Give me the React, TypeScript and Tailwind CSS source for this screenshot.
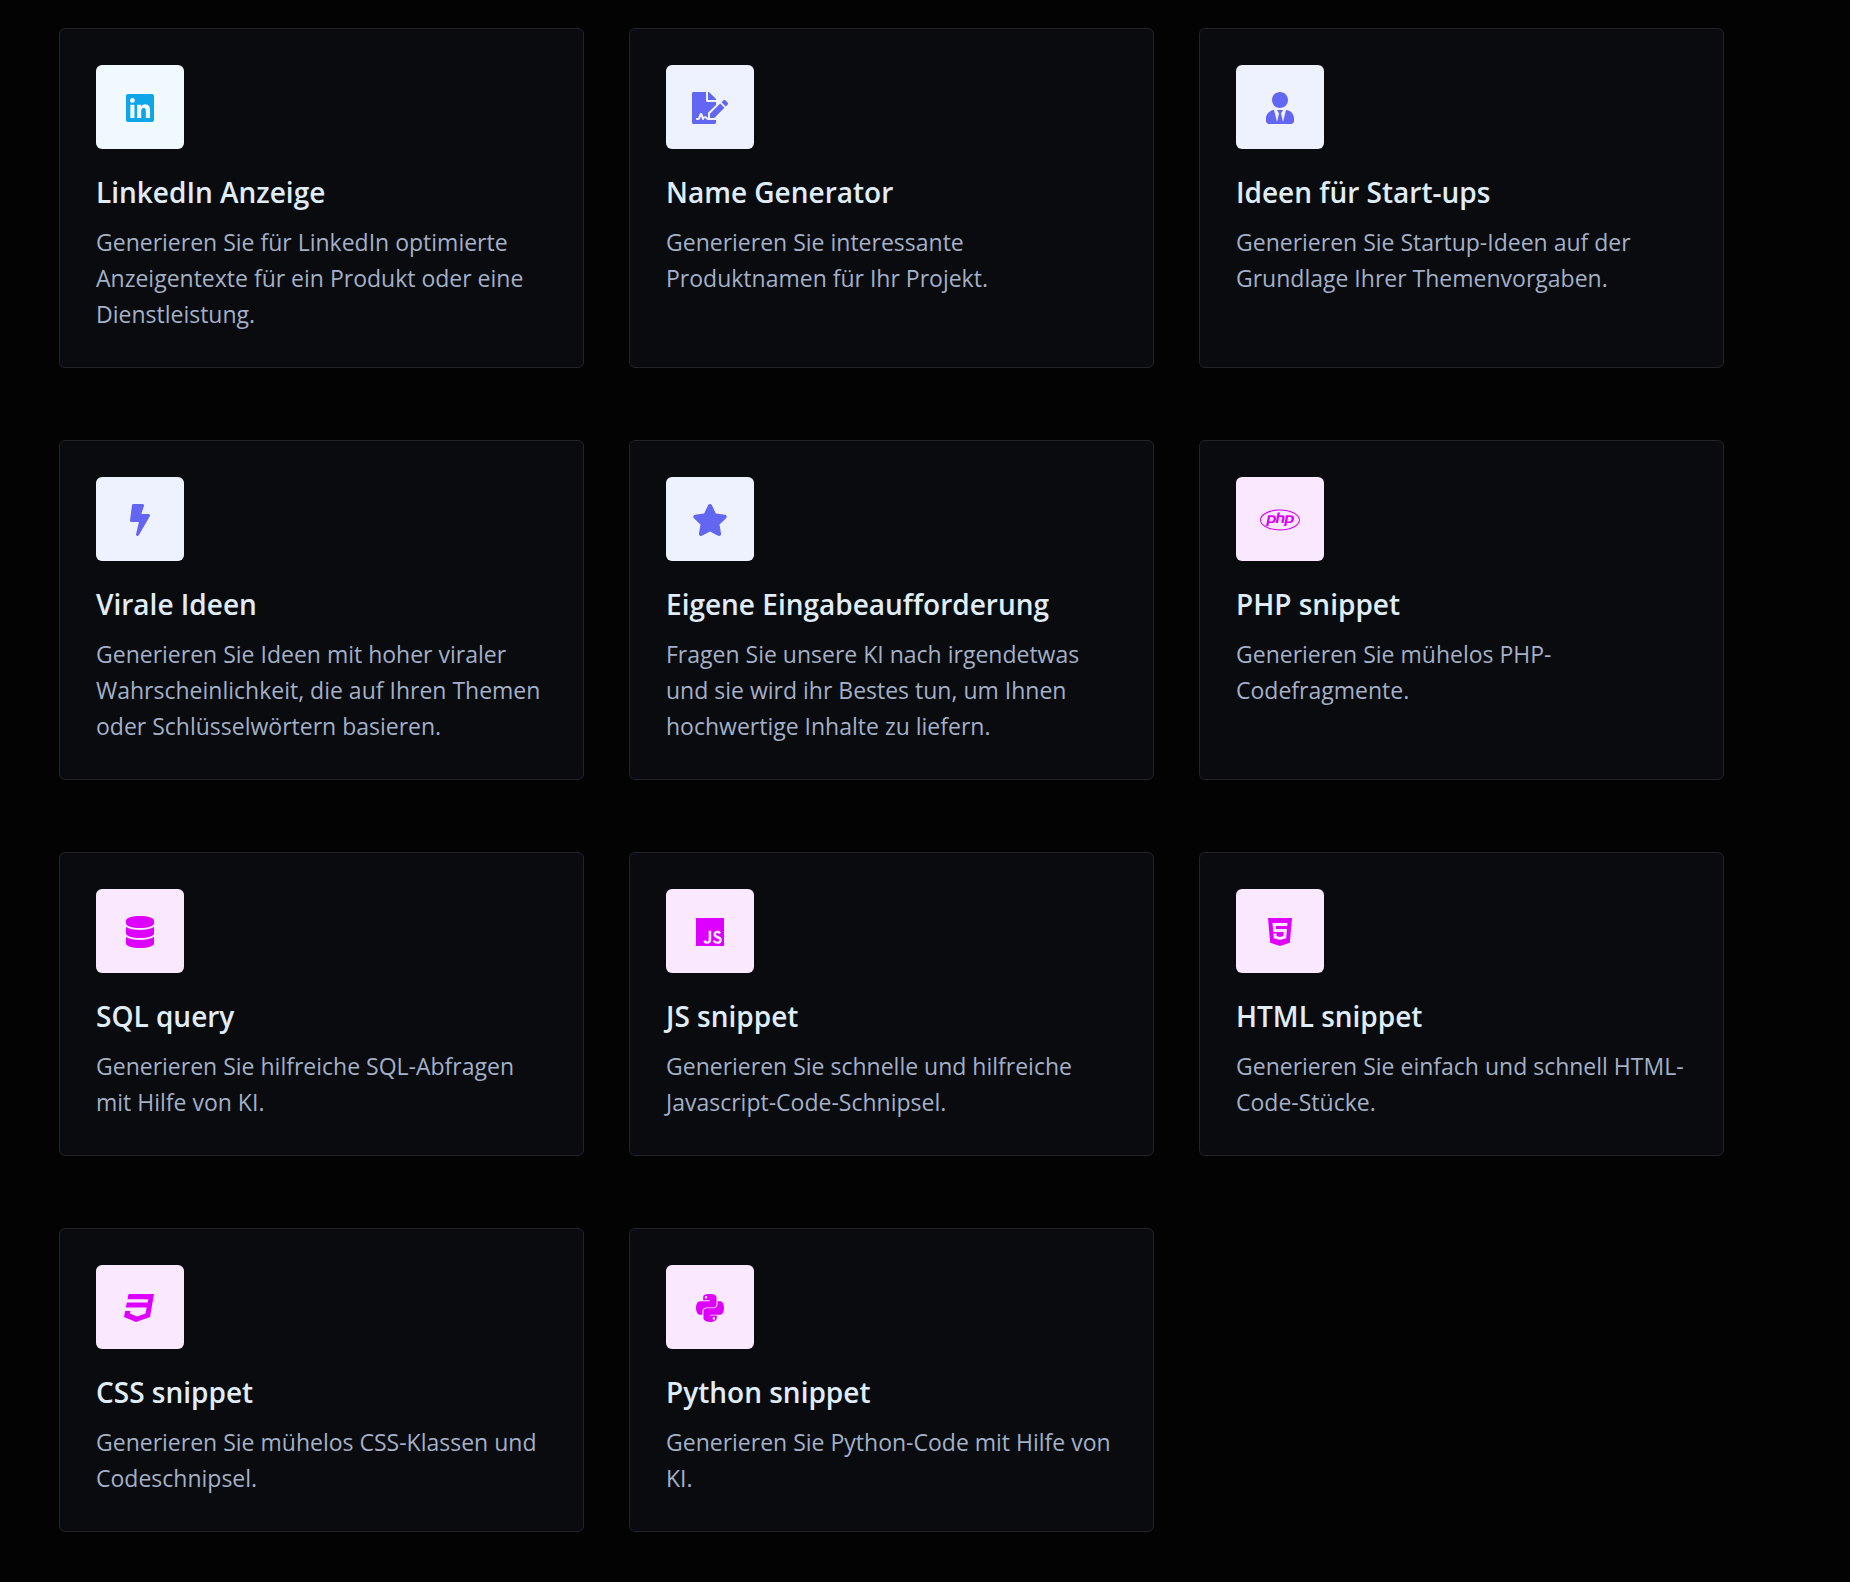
import React from "react";
import type { IconType } from "react-icons";
import {
  FaBolt,
  FaCss3,
  FaDatabase,
  FaFileSignature,
  FaHtml5,
  FaJs,
  FaLinkedin,
  FaPhp,
  FaPython,
  FaStar,
  FaUserTie,
} from "react-icons/fa";

type Template = {
  title: string;
  description: string;
  icon: IconType;
  color: string;
};

const social = "bg-[#f0f9ff] text-[#0ea5e9]";
const ideas = "bg-[#eef2ff] text-[#6366f1]";
const code = "bg-[#fae8ff] text-[#dd00ff]";

const templates: Template[] = [
  {
    title: "LinkedIn Anzeige",
    description:
      "Generieren Sie für LinkedIn optimierte Anzeigentexte für ein Produkt oder eine Dienstleistung.",
    icon: FaLinkedin,
    color: social,
  },
  {
    title: "Name Generator",
    description: "Generieren Sie interessante Produktnamen für Ihr Projekt.",
    icon: FaFileSignature,
    color: ideas,
  },
  {
    title: "Ideen für Start-ups",
    description:
      "Generieren Sie Startup-Ideen auf der Grundlage Ihrer Themenvorgaben.",
    icon: FaUserTie,
    color: ideas,
  },
  {
    title: "Virale Ideen",
    description:
      "Generieren Sie Ideen mit hoher viraler Wahrscheinlichkeit, die auf Ihren Themen oder Schlüsselwörtern basieren.",
    icon: FaBolt,
    color: ideas,
  },
  {
    title: "Eigene Eingabeaufforderung",
    description:
      "Fragen Sie unsere KI nach irgendetwas und sie wird ihr Bestes tun, um Ihnen hochwertige Inhalte zu liefern.",
    icon: FaStar,
    color: ideas,
  },
  {
    title: "PHP snippet",
    description: "Generieren Sie mühelos PHP-Codefragmente.",
    icon: FaPhp,
    color: code,
  },
  {
    title: "SQL query",
    description: "Generieren Sie hilfreiche SQL-Abfragen mit Hilfe von KI.",
    icon: FaDatabase,
    color: code,
  },
  {
    title: "JS snippet",
    description:
      "Generieren Sie schnelle und hilfreiche Javascript-Code-Schnipsel.",
    icon: FaJs,
    color: code,
  },
  {
    title: "HTML snippet",
    description: "Generieren Sie einfach und schnell HTML-Code-Stücke.",
    icon: FaHtml5,
    color: code,
  },
  {
    title: "CSS snippet",
    description: "Generieren Sie mühelos CSS-Klassen und Codeschnipsel.",
    icon: FaCss3,
    color: code,
  },
  {
    title: "Python snippet",
    description: "Generieren Sie Python-Code mit Hilfe von KI.",
    icon: FaPython,
    color: code,
  },
];

function TemplateCard({ title, description, icon: Icon, color }: Template) {
  return (
    <a
      href="#"
      className="block rounded-md border border-[#202327] bg-[#090b0e] px-9 pt-9 pb-[35px]"
    >
      <div
        className={`flex w-[88px] justify-center rounded-md pt-[27px] pb-[25px] ${color}`}
      >
        <Icon className="h-8 w-10" />
      </div>
      <h2 className="mt-6 text-[28px] leading-[38px] font-semibold text-[#e0edf8]">
        {title}
      </h2>
      <p className="mt-[13px] text-[23px] leading-9 text-[#a3b0c8]">
        {description}
      </p>
    </a>
  );
}

export default function App() {
  return (
    <main className="min-h-screen bg-[#030304] pt-7 pr-[126px] pb-[50px] pl-[59px] font-['Open_Sans',sans-serif]">
      <div className="grid grid-cols-3 gap-x-[45px] gap-y-[72px]">
        {templates.map((template) => (
          <TemplateCard key={template.title} {...template} />
        ))}
      </div>
    </main>
  );
}
